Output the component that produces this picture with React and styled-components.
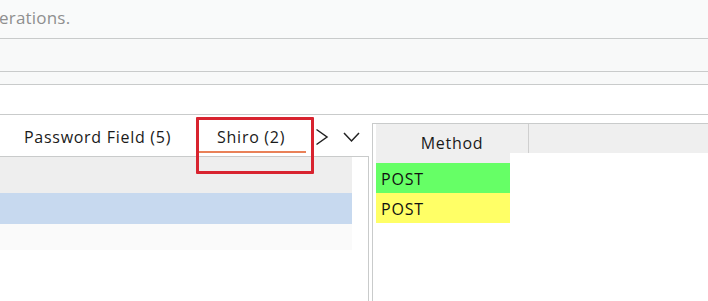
import React from "react";
import styled, { createGlobalStyle } from "styled-components";

const Global = createGlobalStyle`
  html, body {
    margin: 0;
    padding: 0;
    background: #ffffff;
  }
  body {
    font-family: "Open Sans", "Noto Sans", "Liberation Sans", sans-serif;
  }
`;

const Page = styled.div`
  width: 708px;
  height: 301px;
  overflow: hidden;
  background: #ffffff;
  display: flex;
  flex-direction: column;
`;

const Band = styled.div`
  height: ${({ h }) => h}px;
  flex: none;
  background: ${({ bg }) => bg || "#ffffff"};
  border-bottom: 1px solid #c9cbcb;
  display: flex;
  align-items: center;
`;

const Hint = styled.span`
  font-size: 17px;
  color: #8f8f8f;
  margin-left: -1px;
  margin-top: -3px;
  letter-spacing: 0.2px;
`;

const Workspace = styled.div`
  flex: 1;
  display: flex;
  min-height: 0;
`;

const LeftPane = styled.div`
  width: 369px;
  flex: none;
  display: flex;
  flex-direction: column;
`;

const TabBar = styled.div`
  height: 41px;
  flex: none;
  display: flex;
  align-items: stretch;
  gap: 4px;
  border-bottom: 1px solid #c9cbcb;
  padding-left: 3px;
`;

const Tab = styled.div`
  position: relative;
  display: flex;
  align-items: center;
  padding: 3px 21px 0;
  font-size: 16px;
  color: #1a1a1a;
  letter-spacing: 0.72px;
  white-space: nowrap;

  &::after {
    content: "";
    display: ${({ active }) => (active ? "block" : "none")};
    position: absolute;
    left: 0;
    right: 0;
    bottom: 3px;
    height: 2px;
    background: #e98158;
  }
`;

const NavButton = styled.div`
  display: flex;
  align-items: center;
  padding: 3px 0 0 ${({ pad }) => pad}px;
  color: #222;
`;

const Highlight = styled.div`
  position: absolute;
  left: 196px;
  top: 117px;
  width: 112px;
  height: 51px;
  border: 3px solid #d8232f;
  border-radius: 1px;
  pointer-events: none;
`;

const LeftBody = styled.div`
  flex: 1;
  border-right: 1px solid #c9cbcb;
  display: flex;
  flex-direction: column;
`;

const Row = styled.div`
  width: 352px;
  height: ${({ h }) => h}px;
  flex: none;
  background: ${({ bg }) => bg};
`;

const Splitter = styled.div`
  width: 3px;
  flex: none;
`;

const RightPane = styled.div`
  flex: 1;
  padding-top: 8px;
  display: flex;
  flex-direction: column;
`;

const Grid = styled.div`
  flex: 1;
  border-left: 1px solid #c9cbcb;
  border-top: 1px solid #c9cbcb;
  padding-left: 3px;
  display: flex;
  flex-direction: column;
`;

const HeaderRow = styled.div`
  height: 29px;
  flex: none;
  display: flex;
  background: #efefef;
`;

const HeaderCell = styled.div`
  width: ${({ w }) => w}px;
  flex: ${({ w }) => (w ? "none" : "1")};
  display: flex;
  align-items: center;
  justify-content: center;
  font-size: 16px;
  letter-spacing: 0.7px;
  color: #1a1a1a;
  border-right: ${({ w }) => (w ? "1px solid #cfcfcf" : "none")};
  padding-top: 9px;
`;

const Body = styled.div`
  display: flex;
  flex-direction: column;
  width: 134px;
`;

const Spacer = styled.div`
  height: 10px;
  background: #efefef;
`;

const Cell = styled.div`
  height: 30px;
  background: ${({ bg }) => bg};
  font-size: 16px;
  color: #111;
  display: flex;
  align-items: center;
  padding: 2px 0 0 5px;
  box-sizing: border-box;
  letter-spacing: 0.8px;
`;

const Chevron = ({ dir }) =>
  dir === "right" ? (
    <svg width="14" height="18" viewBox="0 0 14 18" fill="none" stroke="#222" strokeWidth="1.5">
      <path d="M1.5 1.5 L12 9 L1.5 16.5" />
    </svg>
  ) : (
    <svg width="17" height="12" viewBox="0 0 17 12" fill="none" stroke="#222" strokeWidth="1.5">
      <path d="M1 2 L8.5 10 L16 2" />
    </svg>
  );

export default function App() {
  return (
    <>
      <Global />
      <Page>
        <Band h={38} bg="#f9fafa">
          <Hint>erations.</Hint>
        </Band>
        <Band h={32} bg="#f8f9f9" />
        <Band h={12} bg="#f8f9f9" />
        <Band h={29} />
        <Workspace>
          <LeftPane>
            <TabBar>
              <Tab>Password Field (5)</Tab>
              <Tab active>Shiro (2)</Tab>
              <NavButton pad={5}>
                <Chevron dir="right" />
              </NavButton>
              <NavButton pad={10}>
                <Chevron dir="down" />
              </NavButton>
            </TabBar>
            <LeftBody>
              <Row h={36} bg="#eeeeee" />
              <Row h={31} bg="#c7d9ef" />
              <Row h={26} bg="#fafafa" />
            </LeftBody>
          </LeftPane>
          <Splitter />
          <RightPane>
            <Grid>
              <HeaderRow>
                <HeaderCell w={152}>Method</HeaderCell>
                <HeaderCell />
              </HeaderRow>
              <Body>
                <Spacer />
                <Cell bg="#66ff66">POST</Cell>
                <Cell bg="#ffff66">POST</Cell>
              </Body>
            </Grid>
          </RightPane>
        </Workspace>
        <Highlight />
      </Page>
    </>
  );
}
